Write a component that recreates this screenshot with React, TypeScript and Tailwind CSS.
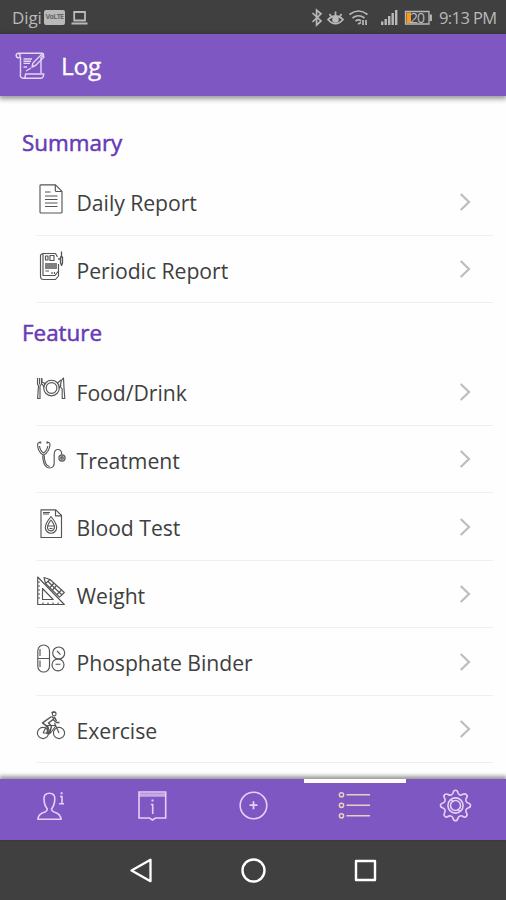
import type { ReactNode } from "react";

interface RowProps {
  label: string;
  icon: ReactNode;
}

function DailyIcon() {
  return (
    <>
      <path d="M4 2.5Q4 1.8 5 1.8H19.5L26 8.3V29Q26 30 25 30H5Q4 30 4 29Z" />
      <path d="M19.3 2V7.2Q19.3 8.5 20.5 8.5H25.8" />
      <path d="M9 9H14.5M9 13H21.5M9 16.5H21.5M9 20H21.5M9 23.5H21.5" />
    </>
  );
}

function PeriodicIcon() {
  return (
    <>
      <path d="M7 3.5V25.5H19L22.5 21V14M7 3.5H19.5L21.5 7" />
      <path d="M7 3.5L4.5 5V26Q4.5 29.5 7.5 29.5H19.5L22.5 26V21" />
      <path d="M9.5 6H12V10H9.5ZM14 5.5H18V10.5H14Z" />
      <path d="M9 14H21M9 16H21M9 18H21" strokeWidth="1.5" />
      <path d="M9.5 21H13M16 22V24M18.5 22V24" />
      <path d="M25.5 1.5V7M24.5 7H26.5V13L25.6 15.5L24.5 13ZM22 9H24.5" strokeWidth="1.3" />
    </>
  );
}

function FoodIcon() {
  return (
    <>
      <circle cx="15.5" cy="15" r="7.8" />
      <circle cx="15.5" cy="15" r="5.4" />
      <path d="M1.5 5V11L2.5 13L1.6 25.5H4L4 13L5.5 11V5M3.5 5V11.5" />
      <path d="M6 5.5V9L10 11M6 11L8 14M25 7L21.5 10M25 12L23 15" />
      <path d="M27.5 5Q24.5 7 24.5 14L26.2 16V25.5H28.8L28 15Z" />
    </>
  );
}

function TreatmentIcon() {
  return (
    <>
      <path d="M4 2.5H2.8Q1.5 2.8 1.6 5Q1.8 12 7.5 15.3Q13.2 12 14 5Q14 2.8 12.8 2.5H11.3" />
      <path d="M3.5 6Q4 10.5 7.5 13Q11.2 10.5 11.8 6" />
      <path d="M6.8 15.5V18Q8 28 13.5 28Q18.5 28 18.2 22V14Q18.5 9.5 22 9.5Q25.5 9.5 25.8 14.5M8.3 15.5V18Q9.5 26.3 13.5 26.3" />
      <circle cx="26" cy="18" r="3.1" fill="#c4c4c4" />
      <circle cx="26" cy="18" r="1.2" />
      <path d="M4.3 1.5V3.5M11.3 1.5V3.5" strokeWidth="1.8" />
    </>
  );
}

function BloodIcon() {
  return (
    <>
      <path d="M5 1.8H19.8L25.5 7.5V29.5H5Z" />
      <path d="M19.5 2V7.8H25.5M7 4.5H14M7 6H13" />
      <path d="M15 8.5Q9.3 15.5 9.3 19.5A5.7 5.7 0 0 0 20.7 19.5Q20.7 15.5 15 8.5Z" />
      <path d="M15 12Q11.5 16.5 11.5 19.3A3.5 3.5 0 0 0 18.5 19.3Q18.5 16.5 15 12ZM11.5 18H18.5M13.5 20.5H16.5" />
    </>
  );
}

function WeightIcon() {
  return (
    <>
      <path d="M1.7 2V29.5H28.3Z" />
      <path d="M6.5 13.5V24.5H17.2ZM2 7H4M2 11H4M2 15H4M2 19H4M2 23H4M7 29V27.5M12 29V27.5M17 29V27.5M22 29V27.5" />
      <path d="M8 2.5L14 4.5L28.3 17.5L23.5 22.2L9.5 8.5ZM14 4.5L9.5 8.5M12 6.5L26 20" />
      <path d="M18 8L14 12.5M20.5 10.5L16.5 15M25.5 15L21 19.5" />
    </>
  );
}

function BinderIcon() {
  return (
    <>
      <rect x="1.8" y="2" width="11.7" height="27" rx="5.8" />
      <path d="M1.8 15.5H13.5M4 17.5V24M4 6V13" />
      <circle cx="22.7" cy="10" r="6" />
      <circle cx="22" cy="21.8" r="6" />
      <path d="M21 8L24.5 11.7M19.5 21.2H24.5" />
    </>
  );
}

function ExerciseIcon() {
  return (
    <>
      <circle cx="7" cy="23" r="5.6" />
      <circle cx="23" cy="23" r="5.6" />
      <circle cx="18.2" cy="4" r="1.9" />
      <path d="M7 23L11 15.5L14.5 23H7M14.5 23L20 15.5M18.5 13L23 23M11 15.5H19.5" />
      <path d="M15.5 6.5L6.5 12.8L12 17.2L11 23.5H13.5L15.5 16L12.5 13L17 9.5L20.5 12.5L23.5 12.5M16 6.5L18.5 9" strokeWidth="1.5" />
      <path d="M15.5 3Q17.5 1 20 2.7M18.5 7L20.5 11" strokeWidth="1.3" />
    </>
  );
}

function Row({ label, icon }: RowProps) {
  return (
    <div className="ml-9 mr-[13px] flex h-[67.5px] items-start border-b border-[#efefef] pt-[14.5px]">
      <svg
        className="h-8 w-8 shrink-0"
        viewBox="0 0 32 32"
        fill="none"
        stroke="#555"
        strokeWidth="1.15"
        strokeLinejoin="round"
      >
        {icon}
      </svg>
      <span className="ml-[8.5px] mt-[5.5px] flex-1 text-[21.2px] leading-[30px] tracking-[-0.04px] text-[#3f3f3f]">
        {label}
      </span>
      <svg
        className="mr-[22px] mt-[9px] h-5 w-3"
        viewBox="0 0 12 20"
        fill="none"
        stroke="#bdbdbd"
        strokeWidth="2.2"
      >
        <path d="M1.7 2L10 10L1.7 18" />
      </svg>
    </div>
  );
}

function StatusBar() {
  return (
    <div className="flex h-[34px] shrink-0 items-center bg-[#404040] text-[17px] text-[#b9b9b9]">
      <span className="ml-[12px] mt-[2px] w-[32px] text-[17px] tracking-[-0.1px]">Digi</span>
      <span className="flex h-[15px] w-[21px] items-center justify-center rounded-[2px] bg-[#b9b9b9] text-[7px] font-bold tracking-[-0.6px] text-[#666]">
        VoLTE
      </span>
      <svg className="ml-[6px] mt-[2px] h-4 w-[17px]" viewBox="0 0 17 16" fill="none" stroke="#b9b9b9" strokeWidth="1.8">
        <path d="M3.2 2H14V10.5H3.2ZM.5 13.5H16.5" />
      </svg>
      <svg className="ml-auto h-5 w-[124px]" viewBox="0 0 124 20" fill="none" stroke="#b9b9b9" strokeWidth="1.7">
        <path d="M1.5 6L10 14L5.6 18V3L10 6.8L1.5 15" />
        <path d="M17 12.5Q24.5 5.5 32 12.5Q24.5 21 17 12.5ZM18.5 7L20.5 10M24.5 4.5V8M30.5 7L28.5 10" />
        <circle cx="24.5" cy="12.5" r="2.5" fill="#b9b9b9" />
        <path d="M38.5 7.5Q47.5 .5 56.5 7.5M41.5 11Q47.5 6.5 53.5 11M44.5 14.2Q47.5 11.8 50 14" />
        <path d="M47 17L50 15.5M52 13V18M55 18V13" />
        <g fill="#b9b9b9" stroke="none">
          <rect x="70" y="14.5" width="2.4" height="3.5" />
          <rect x="73.5" y="12" width="2.4" height="6" />
          <rect x="77" y="9" width="2.4" height="9" />
          <rect x="80.5" y="6" width="2.4" height="12" />
          <rect x="84" y="3" width="2.4" height="15" />
        </g>
        <path d="M94.5 4.5H118V17H94.5Z" strokeWidth="1.3" />
        <path d="M119.8 7.5V14" strokeWidth="2.2" />
        <path d="M95.5 5.5H100V16H95.5Z" fill="#f59b20" stroke="none" />
        <text x="99" y="16" fill="#b9b9b9" stroke="none" fontSize="14" textLength="15">
          20
        </text>
      </svg>
      <span className="ml-[4px] mr-[10px] mt-[2px] w-[57px] whitespace-nowrap text-[16.5px] tracking-[-0.6px]">
        9:13 PM
      </span>
    </div>
  );
}

function Header() {
  return (
    <header className="z-10 flex h-[62px] shrink-0 items-center bg-[#7e57c2] shadow-[0_2px_5px_1px_rgba(0,0,0,0.4)]">
      <svg
        className="ml-[15px] mt-[2px] h-[30px] w-[31px]"
        viewBox="0 0 31 30"
        fill="none"
        stroke="#e5d6f3"
        strokeWidth="1.4"
        strokeLinejoin="round"
      >
        <path d="M3 7Q.8 5.8 1.2 3.5Q1.8 2.2 3.5 2.2H27Q29 2.5 28.5 4.5L26 6.5V22M3.5 2.2Q5.5 3 5 5.5Q4.5 7 3 7M5.5 6V22.5" />
        <path d="M5.5 22.5Q4.5 27 8.5 27.2H26Q28.5 27 28.8 23H10.5Q10.5 27 8.5 27.2" />
        <path d="M8.5 8H17M8.5 10.2H16M8.5 12.4H15M8.5 16H12" />
        <path d="M17 16L18 12L26.5 3.5L29 6L20.5 14.5ZM16 17L11 20" />
      </svg>
      <h1 className="ml-[15px] mt-[1px] text-[24.5px] leading-[34px] tracking-[-0.3px] text-white [-webkit-text-stroke:0.3px_white]">
        Log
      </h1>
    </header>
  );
}

function TabBar() {
  return (
    <nav className="relative z-10 grid h-[61px] shrink-0 grid-cols-5 justify-items-center bg-[#7e57c2] pt-[7.5px] text-[#e5d0f5] shadow-[0_-2px_4px_1px_rgba(0,0,0,0.4)]">
      <div className="absolute left-[304px] top-0 h-[4px] w-[102px] bg-white" />
      <svg className="h-9 w-9" viewBox="0 0 36 36" fill="none" stroke="currentColor" strokeWidth="1.6">
        <path d="M14.3 22Q11 18 11 11.5Q11 6.2 16.3 6.2Q21.8 6.2 21.8 11.5Q21.8 18 18.5 22Q18.5 24 21 25Q27.8 27 28 32.3H5Q5 27 12 25Q14.3 24 14.3 22Z" />
        <path d="M27 9.5H29V16M26 16.8H31" />
        <path d="M27.7 6.3H29.5" strokeWidth="2.2" />
      </svg>
      <svg className="h-9 w-9" viewBox="0 0 36 36" fill="none" stroke="currentColor" strokeWidth="1.6">
        <path d="M5 5H31.7V31H21.5L18.5 33L15.5 31H5Z" />
        <path d="M5 8H32" strokeWidth="3.5" opacity=".7" />
        <path d="M16.8 17.5H18.7V27" />
        <path d="M17.5 13.5H19.5" strokeWidth="2" />
      </svg>
      <svg className="h-9 w-9" viewBox="0 0 36 36" fill="none" stroke="currentColor" strokeWidth="1.6">
        <circle cx="18.5" cy="18.5" r="13.3" />
        <path d="M14.5 18.2H22.5M18.5 14.2V22.2" strokeWidth="1.8" />
      </svg>
      <svg className="h-9 w-9" viewBox="0 0 36 36" fill="none" stroke="#ead0bd" strokeWidth="1.5">
        <circle cx="5.5" cy="7.8" r="2.1" />
        <circle cx="5.5" cy="18.3" r="2.1" />
        <circle cx="5.5" cy="28.8" r="2.1" />
        <path d="M10.5 7.8H34M10.5 18.3H34M10.5 28.8H34" />
      </svg>
      <svg className="h-9 w-9" viewBox="0 0 36 36" fill="none" stroke="currentColor" strokeWidth="1.6" strokeLinejoin="round">
        <path d="M16 6Q16.5 3.2 18.5 3.2T21 6Q21.5 7.5 23 8Q24.5 8.5 26 7.2Q28 6.2 29.5 7.8T29.3 11.2Q28.5 12.5 29 14Q29.5 15.5 31 16Q33.5 16.5 33.5 18.5T31 21Q29.5 21.5 29 23Q28.5 24.5 29.5 26Q30.8 28 29.3 29.5T25.8 29.3Q24.5 28.5 23 29Q21.5 29.5 21 31Q20.5 33.8 18.5 33.8T16 31Q15.5 29.5 14 29Q12.5 28.5 11 29.5Q9 30.8 7.7 29.3T7.5 25.8Q8.5 24.5 8 23Q7.5 21.5 6 21Q3.5 20.5 3.5 18.5T6 16Q7.5 15.5 8 14Q8.5 12.5 7.5 11Q6.2 9 7.7 7.7T11.2 7.5Q12.5 8.5 14 8Q15.5 7.5 16 6Z" />
        <circle cx="18.5" cy="18.5" r="7.6" />
        <circle cx="18.5" cy="18.5" r="5" />
        <path d="M14 12.5L16.5 15M23 24.5L20.5 22" />
      </svg>
    </nav>
  );
}

function SystemNav() {
  return (
    <div className="flex h-[60px] shrink-0 items-center justify-center gap-[84px] bg-[#404040]">
      <svg className="h-7 w-7" viewBox="0 0 28 28" fill="none" stroke="#fff" strokeWidth="2.3" strokeLinejoin="round">
        <path d="M4.5 14.5L23.5 3.8V25.2Z" />
      </svg>
      <svg className="h-7 w-7" viewBox="0 0 28 28" fill="none" stroke="#fff" strokeWidth="2.4">
        <circle cx="14.5" cy="14.5" r="11" />
      </svg>
      <svg className="h-7 w-7" viewBox="0 0 28 28" fill="none" stroke="#fff" strokeWidth="2.4" strokeLinejoin="round">
        <path d="M5 5H24V24H5Z" />
      </svg>
    </div>
  );
}

function SectionTitle({ children }: { children: ReactNode }) {
  return (
    <h2 className="pl-[22px] text-[22.4px] leading-[30px] text-[#673ab7] [-webkit-text-stroke:0.5px_#673ab7]">
      {children}
    </h2>
  );
}

const summary: RowProps[] = [
  { label: "Daily Report", icon: <DailyIcon /> },
  { label: "Periodic Report", icon: <PeriodicIcon /> },
];

const features: RowProps[] = [
  { label: "Food/Drink", icon: <FoodIcon /> },
  { label: "Treatment", icon: <TreatmentIcon /> },
  { label: "Blood Test", icon: <BloodIcon /> },
  { label: "Weight", icon: <WeightIcon /> },
  { label: "Phosphate Binder", icon: <BinderIcon /> },
  { label: "Exercise", icon: <ExerciseIcon /> },
];

export default function App() {
  return (
    <div className="flex h-[900px] w-[506px] flex-col overflow-hidden bg-[#fefefe] font-['Open_Sans','Noto_Sans',sans-serif]">
      <StatusBar />
      <Header />
      <main className="min-h-0 flex-1 overflow-hidden">
        <section className="h-[207px] pt-8">
          <SectionTitle>Summary</SectionTitle>
          <div className="mt-[10px]">
            {summary.map((r) => (
              <Row key={r.label} {...r} />
            ))}
          </div>
        </section>
        <section className="pt-[15px]">
          <SectionTitle>Feature</SectionTitle>
          <div className="mt-[10px]">
            {features.map((r) => (
              <Row key={r.label} {...r} />
            ))}
          </div>
        </section>
      </main>
      <TabBar />
      <SystemNav />
    </div>
  );
}
